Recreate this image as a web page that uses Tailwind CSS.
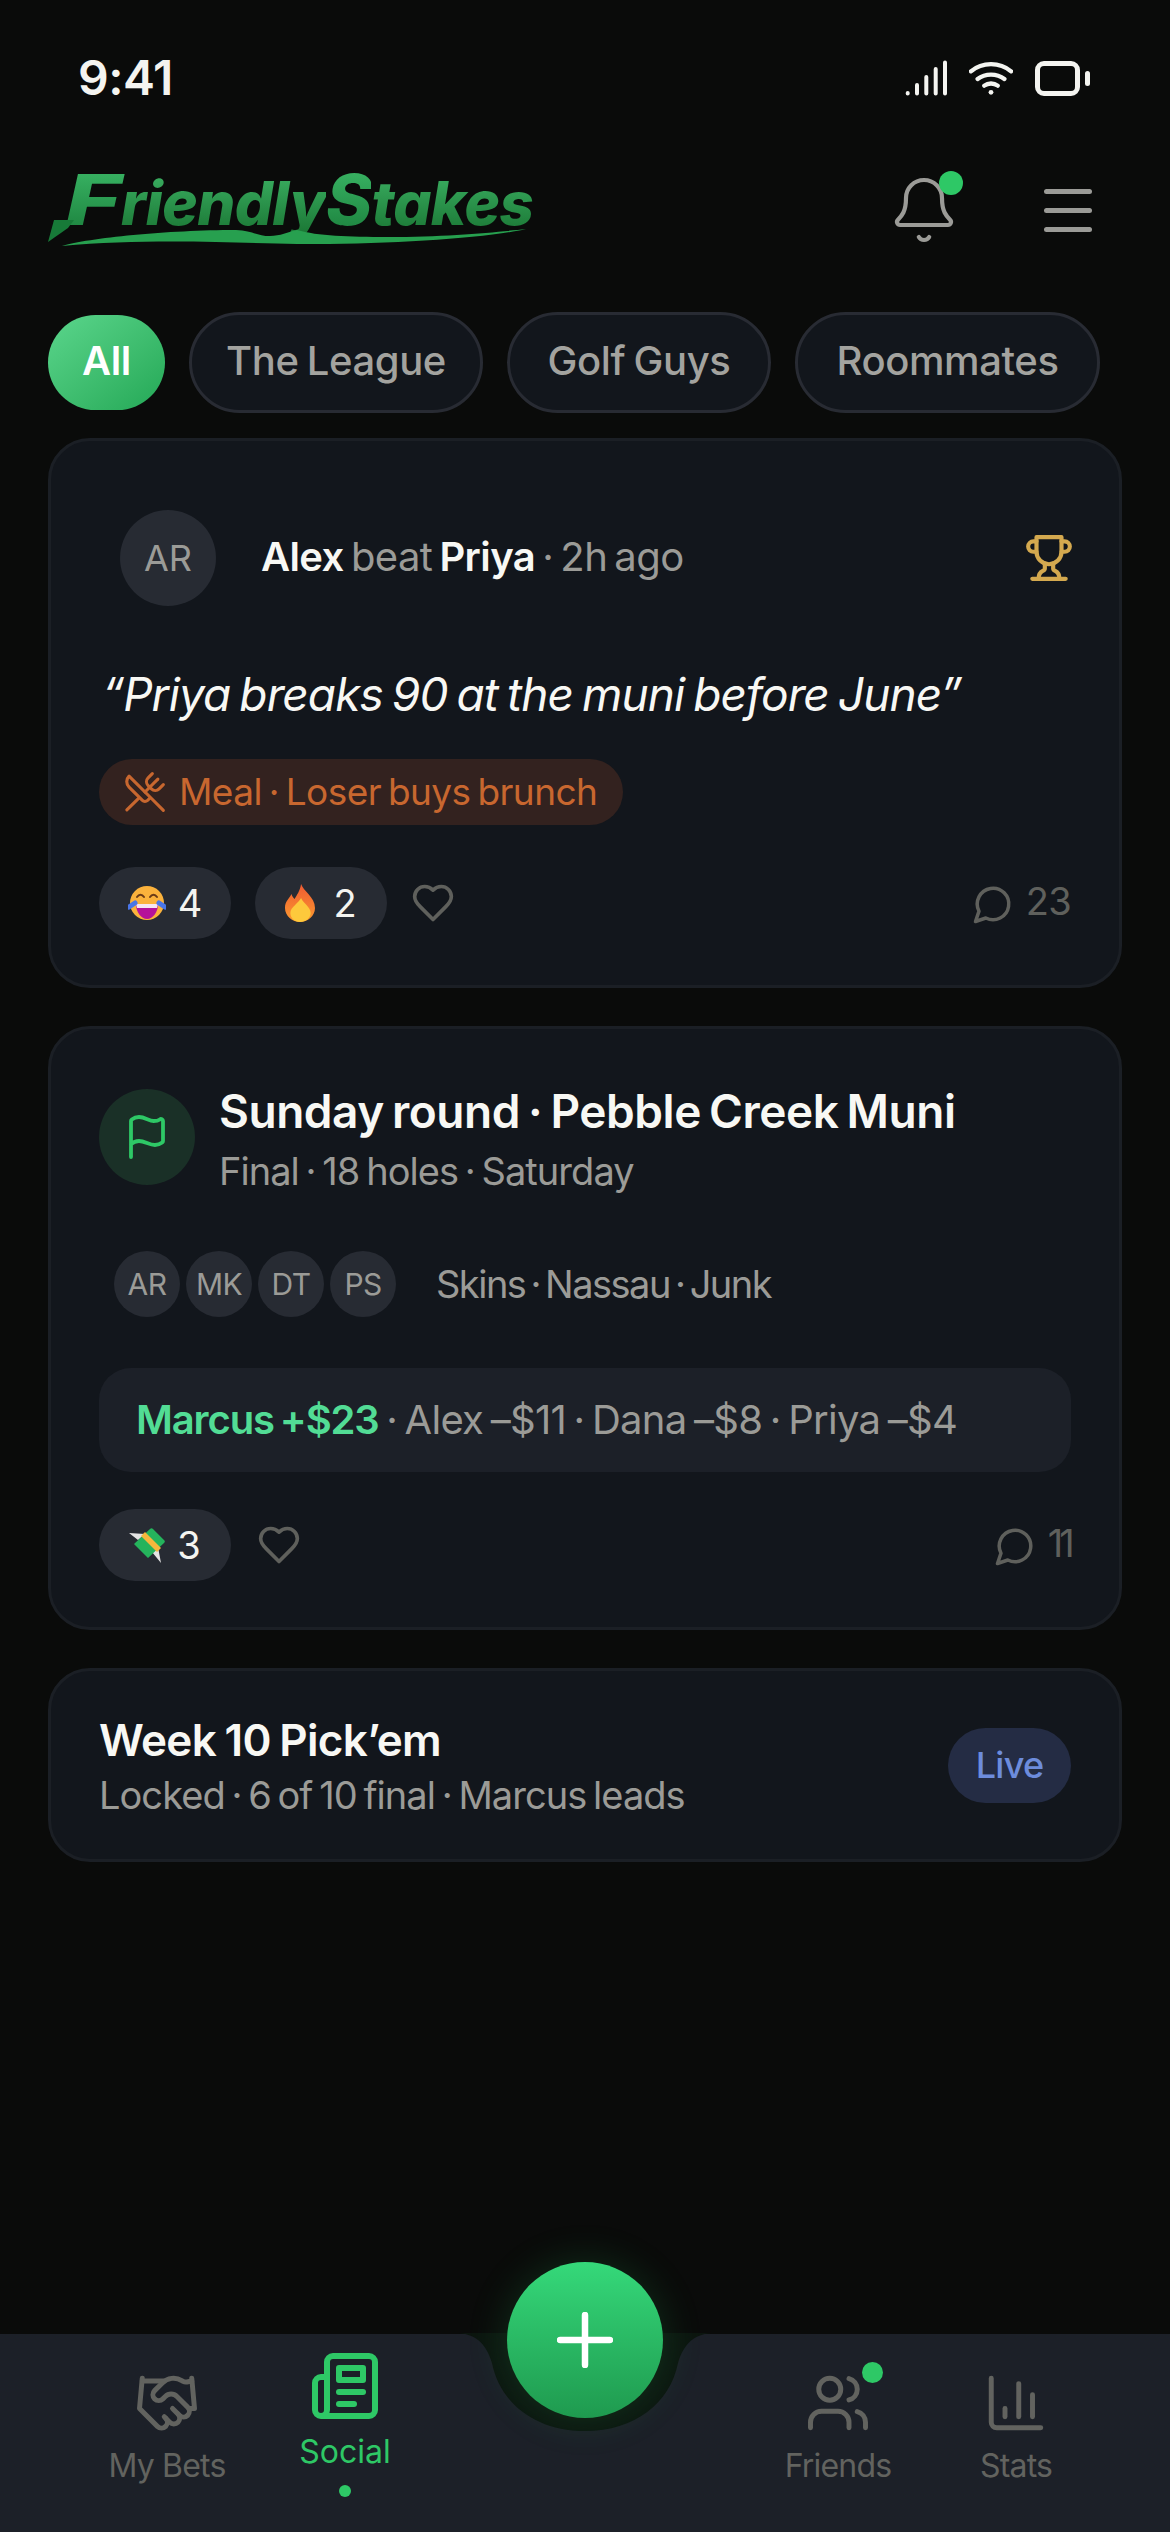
<!DOCTYPE html>
<html lang="en">
  <head>
    <meta charset="UTF-8" />
    <meta name="viewport" content="width=device-width, initial-scale=1.0" />
    <title>FriendlyStakes</title>
    <script src="https://cdn.jsdelivr.net/npm/@tailwindcss/browser@4"></script>
  </head>
  <body>
    <main class="relative w-[1170px] h-[2532px] overflow-hidden bg-[#0a0b0a] font-['Inter',sans-serif] text-[#f4f4f0]">
      <!-- Status bar -->
      <div class="h-[150px] pl-[78px] pr-[80px] pt-[50px] flex justify-between items-start">
        <span class="text-[48px] leading-[56px] font-semibold tracking-[-0.01em]">9:41</span>
        <div class="flex items-center gap-[22px] pt-[10px]">
          <svg class="w-[42px] h-[36px]" viewBox="0 0 42 36" fill="none" stroke="#f4f4f0" stroke-width="4" stroke-linecap="round">
            <path d="M2.7 33v.5M12 25v8.5M21.3 17v16.5M30.7 9v24.5M40 2.5v31" />
          </svg>
          <svg class="w-[44px] h-[36px]" viewBox="0 0 46 36" fill="none" stroke="#f4f4f0" stroke-width="4.5" stroke-linecap="round">
            <path d="M2 11c12-10 30-10 42 0M9 19c8-6 20-6 28 0M16 26c4-3 10-3 14 0" />
            <circle cx="23" cy="33" r="2.5" fill="#f4f4f0" stroke="none" />
          </svg>
          <div class="flex items-center gap-[5px]">
            <div class="w-[45px] h-[35px] rounded-[9px] border-[5px] border-[#f4f4f0]"></div>
            <div class="w-[5px] h-[15px] rounded-full bg-[#f4f4f0]"></div>
          </div>
        </div>
      </div>

      <!-- Header -->
      <header class="h-[162px] pl-[48px] pr-[78px] flex justify-between items-start">
        <div class="relative w-[490px] h-[96px] mt-[4px] italic font-extrabold tracking-[-0.04em] leading-[1.3] flex items-baseline">
          <span class="inline-block w-[73px] pl-[13px] text-[70px] origin-left scale-x-[1.35] bg-gradient-to-b from-[#3fbf6c] to-[#177a38] bg-clip-text text-transparent">F</span>
          <span class="text-[60px] bg-gradient-to-b from-[#3fb768] to-[#16702f] bg-clip-text text-transparent">riendly</span>
          <span class="text-[70px] bg-gradient-to-b from-[#3fbf6c] to-[#177a38] bg-clip-text text-transparent">S</span>
          <span class="text-[60px] bg-gradient-to-b from-[#3fb768] to-[#16702f] bg-clip-text text-transparent">takes</span>
          <svg class="absolute left-0 top-0 w-[490px] h-[96px]" viewBox="0 0 490 96">
            <path d="M6 66L26 66L20 74L0 88Z" fill="#177a38" />
            <path d="M14 92C40 84 120 76 188 76C205 77 210 82 222 82C232 82 240 78 249 76C270 82 300 83 340 83C400 83 450 78 478 75C440 84 340 91 249 90C190 89 100 84 14 92Z" fill="#27a04f" />
          </svg>
        </div>
        <div class="flex items-start gap-[84px] pt-[24px]">
          <div class="relative w-[72px] h-[72px] -ml-[9px]">
            <svg class="w-[72px] h-[72px]" viewBox="0 0 24 24" fill="none" stroke="#9b9b97" stroke-width="1.4" stroke-linecap="round" stroke-linejoin="round">
              <path d="M10.268 21a2 2 0 0 0 3.464 0" />
              <path d="M3.262 15.326A1 1 0 0 0 4 17h16a1 1 0 0 0 .74-1.673C19.41 13.956 18 12.499 18 8A6 6 0 0 0 6 8c0 4.499-1.411 5.956-2.738 7.326" />
            </svg>
            <span class="absolute left-[51px] top-[-3px] w-[24px] h-[24px] rounded-full bg-[#2ec866]"></span>
          </div>
          <div class="w-[48px] pt-[15px] flex flex-col gap-[14px]">
            <span class="h-[5px] rounded-full bg-[#9b9b97]"></span>
            <span class="h-[5px] rounded-full bg-[#9b9b97]"></span>
            <span class="h-[5px] rounded-full bg-[#9b9b97]"></span>
          </div>
        </div>
      </header>

      <!-- Filter chips -->
      <div class="pl-[48px] flex items-center gap-[24px] h-[101px] text-[40px] tracking-[-0.01em] [word-spacing:-2px] font-medium text-[#a3a39f]">
        <span class="w-[117px] h-[95px] pb-[4px] rounded-full bg-gradient-to-br from-[#5ad68c] to-[#22a856] flex items-center justify-center text-white font-semibold">All</span>
        <span class="w-[294px] h-[101px] pb-[4px] rounded-full bg-[#12161c] border-[3px] border-[#282b33] flex items-center justify-center">The League</span>
        <span class="w-[264px] h-[101px] pb-[4px] rounded-full bg-[#12161c] border-[3px] border-[#282b33] flex items-center justify-center">Golf Guys</span>
        <span class="w-[305px] h-[101px] pb-[4px] rounded-full bg-[#12161c] border-[3px] border-[#282b33] flex items-center justify-center">Roommates</span>
      </div>

      <!-- Feed -->
      <section class="mt-[25px] mx-[48px] flex flex-col gap-[38px]">
        <!-- Result card -->
        <article class="h-[550px] rounded-[42px] bg-[#12161c] border-[3px] border-[#1b1f25] pl-[48px] pr-[48px] pt-[69px]">
          <div class="flex items-center h-[96px] pl-[21px]">
            <span class="w-[96px] h-[96px] rounded-full bg-[#272b33] flex items-center justify-center text-[36px] text-[#9b9b97]">AR</span>
            <p class="ml-[45px] pb-[2px] text-[40px] tracking-[-0.015em] [word-spacing:-3.5px] text-[#9b9b97]"><b class="font-semibold text-[#f8f8f4]">Alex</b> beat <b class="font-semibold text-[#f8f8f4]">Priya</b> · 2h ago</p>
            <svg class="ml-auto -mr-[3px] w-[50px] h-[50px]" viewBox="0 0 24 24" fill="none" stroke="#d4a94f" stroke-width="2" stroke-linecap="round" stroke-linejoin="round">
              <path d="M6 9H4.5a2.5 2.5 0 0 1 0-5H6" />
              <path d="M18 9h1.5a2.5 2.5 0 0 0 0-5H18" />
              <path d="M4 22h16" />
              <path d="M10 14.66V17c0 .55-.47.98-.97 1.21C7.85 18.75 7 20.24 7 22" />
              <path d="M14 14.66V17c0 .55.47.98.97 1.21C16.15 18.75 17 20.24 17 22" />
              <path d="M18 2H6v7a6 6 0 0 0 12 0V2Z" />
            </svg>
          </div>
          <p class="mt-[58px] pl-[3px] text-[46px] leading-[60px] italic tracking-[-0.02em] [word-spacing:-3px] text-[#f8f8f4]">“Priya breaks 90 at the muni before June”</p>
          <div class="mt-[35px] w-fit h-[66px] rounded-full bg-[#33221f] pl-[24px] pr-[26px] flex items-center gap-[12px] text-[37px] tracking-[-0.015em] [word-spacing:-3px] text-[#c8672f]">
            <svg class="w-[44px] h-[44px]" viewBox="0 0 24 24" fill="none" stroke="#c8672f" stroke-width="1.7" stroke-linecap="round" stroke-linejoin="round">
              <path d="m16 2-2.3 2.3a3 3 0 0 0 0 4.2l1.8 1.8a3 3 0 0 0 4.2 0L22 8" />
              <path d="M15 15 3.3 3.3a4.2 4.2 0 0 0 0 6l7.3 7.3c.7.7 2 .7 2.8 0L15 15Zm0 0 7 7" />
              <path d="m2.1 21.8 6.4-6.3" />
              <path d="m19 5-7 7" />
            </svg>
            <span>Meal · Loser buys brunch</span>
          </div>
          <div class="mt-[42px] flex items-center h-[72px]">
            <span class="w-[132px] h-[72px] rounded-full bg-[#272b33] flex items-center justify-center gap-[12px] text-[38px]">
              <svg class="w-[38px] h-[38px]" viewBox="0 0 38 38">
                <circle cx="19" cy="19" r="17" fill="#fbb23c" />
                <path d="M8 20h22c0 8-5 15-11 15S8 28 8 20Z" fill="#b5129a" />
                <path d="M8 20h22l-1 4H9Z" fill="#f6e6f2" />
                <path d="M9 13c2-3 5-3 7 0M22 13c2-3 5-3 7 0" fill="none" stroke="#6b3a16" stroke-width="2" stroke-linecap="round" />
                <path d="M1 23l6-4M37 23l-6-4" stroke="#4a76e8" stroke-width="5" stroke-linecap="round" />
              </svg>
              4
            </span>
            <span class="ml-[24px] w-[132px] h-[72px] rounded-full bg-[#272b33] flex items-center justify-center gap-[18px] text-[38px]">
              <svg class="w-[30px] h-[38px]" viewBox="0 0 28 38" preserveAspectRatio="none">
                <defs>
                  <linearGradient id="flame" x1="0" y1="0" x2="0" y2="1">
                    <stop offset="0" stop-color="#ee5a32" />
                    <stop offset="1" stop-color="#fb9a2f" />
                  </linearGradient>
                </defs>
                <path d="M15 0c2 7 13 13 13 24 0 8-7 14-14 14S0 32 0 24c0-7 4-9 6-14 1 3 2 4 3 5 2-4 5-8 6-15Z" fill="url(#flame)" />
                <path d="M15 14c1 4 9 9 9 15 0 5-5 9-10 9s-9-4-9-9c0-6 8-10 10-15Z" fill="#fdc93c" />
              </svg>
              2
            </span>
            <svg class="ml-[24px] w-[44px] h-[44px]" viewBox="0 0 24 24" fill="none" stroke="#5f605c" stroke-width="2" stroke-linecap="round" stroke-linejoin="round">
              <path d="M19 14c1.49-1.46 3-3.21 3-5.5A5.5 5.5 0 0 0 16.5 3c-1.76 0-3 .5-4.5 2-1.5-1.5-2.74-2-4.5-2A5.5 5.5 0 0 0 2 8.5c0 2.3 1.5 4.05 3 5.5l7 7Z" />
            </svg>
            <div class="ml-auto flex items-center gap-[12px] text-[38px] tracking-[-0.02em] text-[#5f605c]">
              <svg class="w-[42px] h-[42px] mt-[2px]" viewBox="0 0 24 24" fill="none" stroke="#5f605c" stroke-width="2" stroke-linecap="round" stroke-linejoin="round">
                <path d="M7.9 20A9 9 0 1 0 4 16.1L2 22Z" />
              </svg>
              <span class="mb-[4px]">23</span>
            </div>
          </div>
        </article>

        <!-- Round card -->
        <article class="h-[604px] rounded-[42px] bg-[#12161c] border-[3px] border-[#1b1f25] pl-[48px] pr-[48px] pt-[60px]">
          <div class="flex items-center h-[96px] gap-[24px]">
            <span class="w-[96px] h-[96px] rounded-full bg-[#1a3027] flex items-center justify-center">
              <svg class="w-[48px] h-[48px]" viewBox="0 0 24 24" fill="none" stroke="#2ec866" stroke-width="1.9" stroke-linecap="round" stroke-linejoin="round">
                <path d="M4 22V4a1 1 0 0 1 .4-.8A6 6 0 0 1 8 2c3 0 5 2 7.333 2q2 0 3.067-.8A1 1 0 0 1 20 4v10a1 1 0 0 1-.4.8A6 6 0 0 1 16 16c-3 0-5-2-8-2a6 6 0 0 0-4 1.528" />
              </svg>
            </span>
            <div class="pt-[6px]">
              <h2 class="text-[46px] leading-[58px] font-semibold tracking-[-0.01em] [word-spacing:-3px] text-[#f8f8f4]">Sunday round · Pebble Creek Muni</h2>
              <p class="mt-[3px] text-[38px] leading-[56px] tracking-[-0.025em] [word-spacing:-3px] text-[#9b9b97]">Final · 18 holes · Saturday</p>
            </div>
          </div>
          <div class="mt-[66px] flex items-center h-[66px] pl-[15px]">
            <div class="flex gap-[6px] text-[30px] tracking-[-0.02em] text-[#9b9b97]">
              <span class="w-[66px] h-[66px] rounded-full bg-[#272b33] flex items-center justify-center">AR</span>
              <span class="w-[66px] h-[66px] rounded-full bg-[#272b33] flex items-center justify-center">MK</span>
              <span class="w-[66px] h-[66px] rounded-full bg-[#272b33] flex items-center justify-center">DT</span>
              <span class="w-[66px] h-[66px] rounded-full bg-[#272b33] flex items-center justify-center">PS</span>
            </div>
            <p class="ml-[40px] text-[38px] tracking-[-0.04em] [word-spacing:-4px] text-[#9b9b97]">Skins · Nassau · Junk</p>
          </div>
          <div class="mt-[51px] h-[104px] rounded-[32px] bg-[#1c2028] pl-[37px] flex items-center text-[40px] tracking-[-0.018em] [word-spacing:-3px] text-[#9b9b97]">
            <p><b class="font-semibold tracking-[-0.028em] text-[#52dc95]">Marcus +$23</b> · Alex –$11 · Dana –$8 · Priya –$4</p>
          </div>
          <div class="mt-[37px] flex items-center h-[72px]">
            <span class="w-[132px] h-[72px] rounded-full bg-[#272b33] flex items-center justify-center gap-[12px] text-[38px]">
              <svg class="w-[36px] h-[36px]" viewBox="0 0 36 36">
                <path d="M0 6l16 1-7 6ZM29 20l3 16-9-11Z" fill="#e4e4e4" />
                <path d="M5 17 21 2a2 2 0 0 1 3 0l11 11a2 2 0 0 1 0 3L19 31Z" fill="#25b35c" />
                <path d="M12 9l16 16 4-4L16 5Z" fill="#f6b73c" />
              </svg>
              3
            </span>
            <svg class="ml-[26px] w-[44px] h-[44px]" viewBox="0 0 24 24" fill="none" stroke="#5f605c" stroke-width="2" stroke-linecap="round" stroke-linejoin="round">
              <path d="M19 14c1.49-1.46 3-3.21 3-5.5A5.5 5.5 0 0 0 16.5 3c-1.76 0-3 .5-4.5 2-1.5-1.5-2.74-2-4.5-2A5.5 5.5 0 0 0 2 8.5c0 2.3 1.5 4.05 3 5.5l7 7Z" />
            </svg>
            <div class="ml-auto flex items-center gap-[12px] text-[38px] tracking-[-0.1em] text-[#5f605c]">
              <svg class="w-[42px] h-[42px] mt-[2px]" viewBox="0 0 24 24" fill="none" stroke="#5f605c" stroke-width="2" stroke-linecap="round" stroke-linejoin="round">
                <path d="M7.9 20A9 9 0 1 0 4 16.1L2 22Z" />
              </svg>
              <span class="mb-[4px]">11</span>
            </div>
          </div>
        </article>

        <!-- Pick'em card -->
        <article class="h-[194px] rounded-[42px] bg-[#12161c] border-[3px] border-[#1b1f25] pl-[48px] pr-[48px] flex items-center justify-between">
          <div class="pt-[3px]">
            <h2 class="text-[44px] leading-[56px] font-semibold tracking-[-0.015em] [word-spacing:-2px] text-[#f8f8f4]">Week 10 Pick’em</h2>
            <p class="mt-[1px] text-[38px] leading-[52px] tracking-[-0.025em] [word-spacing:-3px] text-[#9b9b97]">Locked · 6 of 10 final · Marcus leads</p>
          </div>
          <span class="w-[123px] h-[75px] rounded-full bg-[#242c44] flex items-center justify-center text-[36px] font-medium tracking-[-0.02em] text-[#6d8cdc]">Live</span>
        </article>
      </section>

      <!-- Bottom nav -->
      <nav class="absolute left-0 right-0 bottom-0 h-[198px] bg-[#1c2028] text-[32px] tracking-[-0.025em] text-[#62635f]">
        <div class="relative h-full">
          <div class="flex h-full">
            <div class="ml-[78px] w-[178px] pt-[36px] flex flex-col items-center">
              <svg class="w-[66px] h-[66px]" viewBox="0 0 24 24" fill="none" stroke="#62635f" stroke-width="1.8" stroke-linecap="round" stroke-linejoin="round">
                <path d="m11 17 2 2a1 1 0 1 0 3-3" />
                <path d="m14 14 2.5 2.5a1 1 0 1 0 3-3l-3.88-3.88a3 3 0 0 0-4.24 0l-.88.88a1 1 0 1 1-3-3l2.81-2.81a5.79 5.79 0 0 1 7.06-.87l.47.28a2 2 0 0 0 1.42.25L21 4" />
                <path d="m21 3 1 11h-2" />
                <path d="M3 3 2 14l6.5 6.5a1 1 0 1 0 3-3" />
                <path d="M3 4h8" />
              </svg>
              <span class="mt-[8px] leading-[44px]">My Bets</span>
            </div>
            <div class="w-[178px] pt-[16px] flex flex-col items-center text-[#2ec866] tracking-normal">
              <svg class="w-[72px] h-[72px]" viewBox="0 0 24 24" fill="none" stroke="#2ec866" stroke-width="2" stroke-linecap="round" stroke-linejoin="round">
                <path d="M4 22h16a2 2 0 0 0 2-2V4a2 2 0 0 0-2-2H8a2 2 0 0 0-2 2v16a2 2 0 0 1-2 2Zm0 0a2 2 0 0 1-2-2v-9c0-1.1.9-2 2-2h2" />
                <path d="M18 14h-8" />
                <path d="M15 18h-5" />
                <path d="M10 6h8v4h-8V6Z" />
              </svg>
              <span class="mt-[8px] leading-[44px]">Social</span>
              <span class="mt-[11px] w-[12px] h-[12px] rounded-full bg-[#2ec866]"></span>
            </div>
            <div class="ml-[315px] w-[178px] pt-[36px] flex flex-col items-center">
              <div class="relative w-[66px] h-[66px]">
                <svg class="w-[66px] h-[66px]" viewBox="0 0 24 24" fill="none" stroke="#62635f" stroke-width="1.8" stroke-linecap="round" stroke-linejoin="round">
                  <path d="M16 21v-2a4 4 0 0 0-4-4H6a4 4 0 0 0-4 4v2" />
                  <circle cx="9" cy="7" r="4" />
                  <path d="M22 21v-2a4 4 0 0 0-3-3.87" />
                  <path d="M16 3.13a4 4 0 0 1 0 7.75" />
                </svg>
                <span class="absolute right-[-12px] top-[-8px] w-[21px] h-[21px] rounded-full bg-[#2ec866]"></span>
              </div>
              <span class="mt-[8px] leading-[44px]">Friends</span>
            </div>
            <div class="w-[178px] pt-[36px] flex flex-col items-center">
              <svg class="w-[66px] h-[66px]" viewBox="0 0 24 24" fill="none" stroke="#62635f" stroke-width="1.8" stroke-linecap="round" stroke-linejoin="round">
                <path d="M3 3v16a2 2 0 0 0 2 2h16" />
                <path d="M18 17V9" />
                <path d="M13 17V5" />
                <path d="M8 17v-3" />
              </svg>
              <span class="mt-[8px] leading-[44px]">Stats</span>
            </div>
          </div>
          <!-- FAB notch -->
          <svg class="absolute left-[450px] top-[-1px] w-[270px] h-[100px]" viewBox="0 0 270 100">
            <path d="M5 0H265C245 0 234 10 228 30C220 70 185 98 135 98C85 98 50 70 42 30C36 10 25 0 5 0Z" fill="#0c150f" />
          </svg>
        </div>
      </nav>
      <button class="absolute left-[507px] top-[2262px] w-[156px] h-[156px] rounded-full bg-gradient-to-b from-[#35d97a] to-[#1f9a4f] shadow-[0_0_40px_rgba(46,200,102,0.18)] flex items-center justify-center">
        <svg class="w-[56px] h-[56px]" viewBox="0 0 56 56" fill="none" stroke="#fff" stroke-width="6.5" stroke-linecap="round">
          <path d="M28 3v50M3 28h50" />
        </svg>
      </button>
    </main>
  </body>
</html>
